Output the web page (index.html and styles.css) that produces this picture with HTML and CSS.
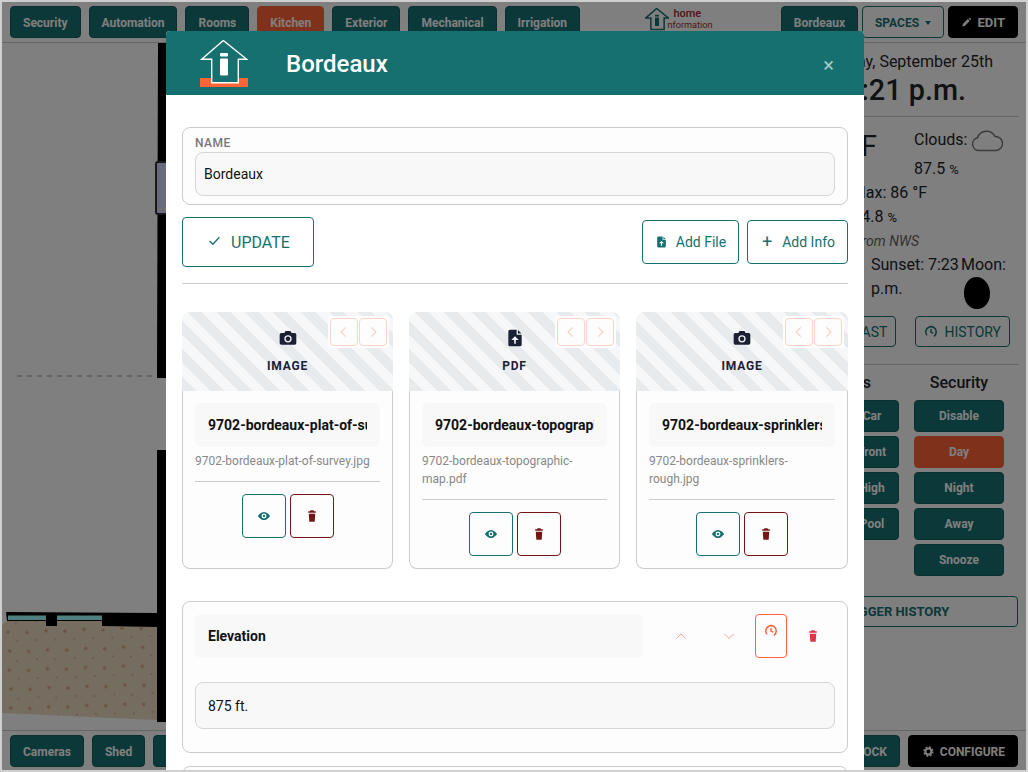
FILE: index.html

```html
<!DOCTYPE html>
<html lang="en">
<head>
    <meta charset="UTF-8">
    <meta name="viewport" content="width=device-width, initial-scale=1.0">
    <title>Bordeaux - Home Information</title>
    <link rel="stylesheet" href="styles.css">
</head>
<body>
    <svg class="icon-defs" aria-hidden="true">
        <symbol id="i-camera" viewBox="0 0 24 24">
            <path d="M9 3.5 7.6 6H4a2 2 0 0 0-2 2v10a2 2 0 0 0 2 2h16a2 2 0 0 0 2-2V8a2 2 0 0 0-2-2h-3.6L15 3.5z"/>
            <circle cx="12" cy="13" r="3.6" fill="none" stroke="#f4f5f7" stroke-width="1.6"/>
        </symbol>
        <symbol id="i-file-up" viewBox="0 0 24 24">
            <path fill-rule="evenodd" d="M6 2h8v6h6v12a2 2 0 0 1-2 2H6a2 2 0 0 1-2-2V4a2 2 0 0 1 2-2zM12 10l-4.5 4.5H11V19h2v-4.500h3.500zM15.500 2.300 19.700 6.500H15.500z"/>
        </symbol>
        <symbol id="i-eye" viewBox="0 0 24 24">
            <path fill-rule="evenodd" d="M12 5C6 5 1.500 12 1.500 12S6 19 12 19s10.500-7 10.500-7S18 5 12 5zM12 7.800a4.200 4.200 0 1 1 0 8.400 4.200 4.200 0 0 1 0-8.400zM12 10a2 2 0 1 0 0 4 2 2 0 0 0 0-4z"/>
        </symbol>
        <symbol id="i-trash" viewBox="0 0 24 24">
            <path d="M9.500 2h5l1 2H18.500v2.500H5.500V4h3zM6.500 8h11l-.8 13a1.500 1.500 0 0 1-1.500 1H8.800a1.500 1.500 0 0 1-1.500-1z"/>
        </symbol>
        <symbol id="i-history" viewBox="0 0 24 24">
            <path d="M5 17.500A9 9 0 1 1 21 12a9 9 0 0 1-4 7.500" fill="none" stroke="currentColor" stroke-width="2.600"/>
            <path d="M12 7v5.500l4 1.500" fill="none" stroke="currentColor" stroke-width="2.400"/>
        </symbol>
        <symbol id="i-gear" viewBox="0 0 24 24">
            <circle cx="12" cy="12" r="6.500" fill="none" stroke="currentColor" stroke-width="4.500"/>
            <circle cx="12" cy="12" r="9.800" fill="none" stroke="currentColor" stroke-width="3.500" stroke-dasharray="4.200 3.500"/>
        </symbol>
        <symbol id="i-pencil" viewBox="0 0 24 24">
            <path d="M3 21l1.200-5.500L15.500 4.200l4.300 4.300L8.500 19.800zM17 2.700l1.300-1a1.500 1.500 0 0 1 2 0l2 2a1.500 1.500 0 0 1 0 2l-1 1.300z"/>
        </symbol>
        <symbol id="i-left" viewBox="0 0 24 24"><path d="M15 4l-8 8 8 8" fill="none" stroke="currentColor" stroke-width="2"/></symbol>
        <symbol id="i-right" viewBox="0 0 24 24"><path d="M9 4l8 8-8 8" fill="none" stroke="currentColor" stroke-width="2"/></symbol>
        <symbol id="i-up" viewBox="0 0 24 24"><path d="M3 17l9-9 9 9" fill="none" stroke="currentColor" stroke-width="2"/></symbol>
        <symbol id="i-down" viewBox="0 0 24 24"><path d="M3 8l9 9 9-9" fill="none" stroke="currentColor" stroke-width="2"/></symbol>
        <symbol id="i-house" viewBox="0 0 48 47">
            <path d="M1.700 19.300 23.300 0.500 46.700 19.300H38.300V42.700H11.700V19.300z" fill="none" stroke="currentColor" stroke-width="3"/>
            <rect x="20" y="13" width="8" height="3.500" rx="1" fill="currentColor"/>
            <rect x="20" y="18.500" width="8" height="17" rx="1" fill="currentColor"/>
        </symbol>
    </svg>

    <div class="stage">
        <header class="top-bar">
            <nav class="btn-group">
                <a class="btn">Security</a>
                <a class="btn">Automation</a>
                <a class="btn">Rooms</a>
                <a class="btn btn-active">Kitchen</a>
                <a class="btn">Exterior</a>
                <a class="btn">Mechanical</a>
                <a class="btn">Irrigation</a>
            </nav>
            <div class="brand">
                <svg class="brand-house"><use href="#i-house"/></svg>
                <div class="brand-text">
                    <span class="brand-home">home</span>
                    <span class="brand-info">nformation</span>
                </div>
            </div>
            <div class="btn-group top-right">
                <a class="btn">Bordeaux</a>
                <a class="btn btn-outline">SPACES <span class="caret"></span></a>
                <a class="btn btn-dark"><svg class="icon-sm"><use href="#i-pencil"/></svg> EDIT</a>
            </div>
        </header>

        <main class="main">
            <div class="plan">
                <svg class="plan-svg" viewBox="2 43 766 687" width="766" height="687">
                    <defs>
                        <pattern id="stipple" width="38" height="38" patternUnits="userSpaceOnUse" patternTransform="rotate(-2)">
                            <circle cx="6" cy="6" r="1.800" fill="#d8a888"/>
                            <circle cx="25" cy="5" r="1.800" fill="#d8a888"/>
                            <circle cx="14" cy="14" r="1" fill="#d0b090"/>
                            <circle cx="32" cy="15" r="1" fill="#d0b090"/>
                            <circle cx="5" cy="25" r="1.800" fill="#d8a888"/>
                            <circle cx="24" cy="24" r="1.800" fill="#d8a888"/>
                            <circle cx="14" cy="33" r="1" fill="#d0b090"/>
                            <circle cx="33" cy="33" r="1" fill="#d0b090"/>
                        </pattern>
                    </defs>
                    <path d="M158 43H168V378H157z" fill="#000"/>
                    <rect x="156" y="162" width="12" height="52" rx="2" fill="#d4d4ff" stroke="#333" stroke-width="2"/>
                    <rect x="157" y="208" width="10" height="3" fill="#ddd"/>
                    <line x1="17" y1="376" x2="156" y2="376" stroke="#999" stroke-dasharray="5 5"/>
                    <path d="M157 450H168V722H157z" fill="#000"/>
                    <path d="M6 612 158 613V627H102V621H57V626H46V621H7z" fill="#000"/>
                    <path d="M8 615.500H46V620H8zM57 615.500H102V620H57z" fill="#a0ffff"/>
                    <path d="M7 621H46V626H57V621H102V626L157 627V720L2 713V625z" fill="#eadbc0"/>
                    <path d="M7 621H46V626H57V621H102V626L157 627V720L2 713V625z" fill="url(#stipple)"/>
                </svg>
            </div>

            <aside class="panel">
                <div class="date-line">Thursday, September 25th</div>
                <div class="time-line">12:21 p.m.</div>
                <div class="divider"></div>

                <div class="wx-top">
                    <div class="wx-temp">77 °F</div>
                    <div>
                        <div class="wx-clouds">Clouds:
                            <svg class="cloud" viewBox="0 0 32 24"><path d="M8 22.500A6.500 6.500 0 0 1 6.500 9.700 9.500 9.500 0 0 1 24 8.500 7 7 0 0 1 25 22.500z" fill="none" stroke="#777" stroke-width="1.500"/></svg>
                        </div>
                        <div class="wx-pct">87.5 <small>%</small></div>
                    </div>
                </div>
                <div class="wx-line wx-max">Min: 71 °F &nbsp;Max: 86 °F</div>
                <div class="wx-line wx-hum">Humidity: 54.8 <small>%</small></div>
                <div class="wx-line wx-src">Forecast from NWS</div>

                <div class="sun-row">
                    <div>Sunrise: 7:02 a.m.</div>
                    <div>Sunset: 7:23 p.m.</div>
                    <div>Moon:<div class="moon"></div></div>
                </div>

                <div class="wx-btns">
                    <a class="btn-line">FORECAST</a>
                    <a class="btn-line"><svg class="icon-sm"><use href="#i-history"/></svg> HISTORY</a>
                </div>
                <div class="divider divider-low"></div>

                <div class="ctl-grid">
                    <div class="ctl-col">
                        <h4 class="ctl-head ctl-head-left">Switches</h4>
                        <a class="btn">Car</a>
                        <a class="btn">Front</a>
                        <a class="btn">High</a>
                        <a class="btn">Pool</a>
                    </div>
                    <div class="ctl-col">
                        <h4 class="ctl-head">Security</h4>
                        <a class="btn">Disable</a>
                        <a class="btn btn-active">Day</a>
                        <a class="btn">Night</a>
                        <a class="btn">Away</a>
                        <a class="btn">Snooze</a>
                    </div>
                </div>
                <a class="btn btn-outline btn-trigger">TRIGGER HISTORY</a>
            </aside>
        </main>

        <footer class="bottom-bar">
            <div class="btn-group">
                <a class="btn">Cameras</a>
                <a class="btn">Shed</a>
                <a class="btn">Pool</a>
            </div>
            <div class="btn-group">
                <a class="btn">CLOCK</a>
                <a class="btn btn-dark"><svg class="icon-sm"><use href="#i-gear"/></svg> CONFIGURE</a>
            </div>
        </footer>

        <div class="backdrop"></div>

        <section class="modal">
            <div class="modal-header">
                <svg class="modal-logo" viewBox="0 0 48 47">
                    <rect y="38" width="48" height="9" fill="#ff6338"/>
                    <path d="M1.700 19.300 23.300 0.500 46.700 19.300H38.300V42.700H11.700V19.300z" fill="#177070" stroke="#fff" stroke-width="1.400"/>
                    <rect x="20" y="13" width="8" height="3.500" rx="1" fill="#fff"/>
                    <rect x="20" y="18.500" width="8" height="17" rx="1" fill="#fff"/>
                </svg>
                <h2 class="modal-title">Bordeaux</h2>
                <span class="modal-close">×</span>
            </div>

            <div class="modal-body">
                <div class="name-box">
                    <label class="name-label">NAME</label>
                    <div class="text-field">Bordeaux</div>
                </div>

                <div class="action-row">
                    <a class="btn-update"><svg class="icon-check" viewBox="0 0 24 24"><path d="M3 13l6 6L21 6" fill="none" stroke="currentColor" stroke-width="2.400"/></svg> UPDATE</a>
                    <div class="action-right">
                        <a class="btn-add"><svg class="icon-add"><use href="#i-file-up"/></svg> Add File</a>
                        <a class="btn-add"><span class="plus">+</span> Add Info</a>
                    </div>
                </div>
                <hr class="rule">

                <div class="file-grid">
                    <article class="file-card">
                        <div class="file-thumb">
                            <svg class="thumb-icon"><use href="#i-camera"/></svg>
                            <div class="thumb-label">IMAGE</div>
                            <div class="thumb-nav">
                                <a class="nav-btn"><svg><use href="#i-left"/></svg></a>
                                <a class="nav-btn"><svg><use href="#i-right"/></svg></a>
                            </div>
                        </div>
                        <div class="file-body">
                            <div class="file-name"><span>9702-bordeaux-plat-of-survey</span></div>
                            <div class="file-path">9702-bordeaux-plat-of-survey.jpg</div>
                            <hr class="rule-card">
                            <div class="file-btns">
                                <a class="square-btn view"><svg><use href="#i-eye"/></svg></a>
                                <a class="square-btn del"><svg><use href="#i-trash"/></svg></a>
                            </div>
                        </div>
                    </article>

                    <article class="file-card">
                        <div class="file-thumb">
                            <svg class="thumb-icon"><use href="#i-file-up"/></svg>
                            <div class="thumb-label">PDF</div>
                            <div class="thumb-nav">
                                <a class="nav-btn"><svg><use href="#i-left"/></svg></a>
                                <a class="nav-btn"><svg><use href="#i-right"/></svg></a>
                            </div>
                        </div>
                        <div class="file-body">
                            <div class="file-name"><span>9702-bordeaux-topographic-map</span></div>
                            <div class="file-path">9702-bordeaux-topographic-map.pdf</div>
                            <hr class="rule-card">
                            <div class="file-btns">
                                <a class="square-btn view"><svg><use href="#i-eye"/></svg></a>
                                <a class="square-btn del"><svg><use href="#i-trash"/></svg></a>
                            </div>
                        </div>
                    </article>

                    <article class="file-card">
                        <div class="file-thumb">
                            <svg class="thumb-icon"><use href="#i-camera"/></svg>
                            <div class="thumb-label">IMAGE</div>
                            <div class="thumb-nav">
                                <a class="nav-btn"><svg><use href="#i-left"/></svg></a>
                                <a class="nav-btn"><svg><use href="#i-right"/></svg></a>
                            </div>
                        </div>
                        <div class="file-body">
                            <div class="file-name"><span>9702-bordeaux-sprinklers-rough</span></div>
                            <div class="file-path">9702-bordeaux-sprinklers-rough.jpg</div>
                            <hr class="rule-card">
                            <div class="file-btns">
                                <a class="square-btn view"><svg><use href="#i-eye"/></svg></a>
                                <a class="square-btn del"><svg><use href="#i-trash"/></svg></a>
                            </div>
                        </div>
                    </article>
                </div>

                <article class="info-card">
                    <div class="info-head">
                        <div class="info-title">Elevation</div>
                        <a class="info-btn"><svg><use href="#i-up"/></svg></a>
                        <a class="info-btn"><svg><use href="#i-down"/></svg></a>
                        <a class="info-history"><svg><use href="#i-history"/></svg></a>
                        <a class="info-del"><svg><use href="#i-trash"/></svg></a>
                    </div>
                    <div class="text-field info-value">875 ft.</div>
                </article>

                <article class="info-card">
                    <div class="info-head">
                        <div class="info-title">Lot Size</div>
                    </div>
                </article>
            </div>
        </section>
    </div>
</body>
</html>
```

FILE: styles.css

```css
* {
    box-sizing: border-box;
}

html, body {
    height: 100%;
}

body {
    margin: 0;
    padding: 2px;
    background: #cfcfcf;
    font-family: Roboto, "Liberation Sans", sans-serif;
    font-size: 16px;
    color: #212529;
    overflow: hidden;
}

.icon-defs {
    display: none;
}

.stage {
    position: relative;
    width: 1024px;
    height: 768px;
    background: #fff;
    overflow: hidden;
    display: flex;
    flex-direction: column;
}

/* buttons under the backdrop */
.btn {
    display: flex;
    align-items: center;
    justify-content: center;
    height: 32px;
    padding: 0 12px;
    background: #177070;
    border: 1px solid #145f5f;
    border-radius: 4px;
    color: #fff;
    font-size: 12px;
    font-weight: 700;
    white-space: nowrap;
}

.btn-active {
    background: #ff6338;
    border-color: #ff6338;
}

.btn-outline {
    background: #fff;
    border-color: #177070;
    color: #177070;
}

.btn-dark {
    background: #000;
    border-color: #000;
}

.btn-group {
    display: flex;
    gap: 8px;
}

.icon-sm {
    width: 13px;
    height: 13px;
    margin-right: 6px;
    fill: currentColor;
}

.top-bar {
    display: flex;
    justify-content: space-between;
    align-items: center;
    height: 41px;
    padding: 0 8px;
    border-bottom: 1px solid #ccc;
    flex: none;
}

.top-bar .btn,
.bottom-bar .btn {
    padding-top: 1px;
}

.top-right {
    gap: 4px;
}

.top-right .btn-outline {
    gap: 6px;
    width: 82px;
}

.top-right .btn-dark {
    width: 70px;
    font-size: 13px;
}

.caret {
    border-top: 4px solid currentColor;
    border-left: 3.500px solid transparent;
    border-right: 3.500px solid transparent;
}

.brand {
    display: flex;
    width: 67px;
    height: 24px;
    margin: -4px 0 0 -3px;
}

.brand-house {
    width: 24px;
    height: 24px;
    color: #177070;
    fill: currentColor;
    flex: none;
}

.brand-text {
    display: flex;
    flex-direction: column;
    color: #a52a2a;
    line-height: 11px;
}

.brand-home {
    font-size: 11px;
    font-weight: 500;
    margin-left: 4px;
}

.brand-info {
    font-size: 9.200px;
    margin-left: -2px;
}

.main {
    flex: 1;
    display: flex;
    min-height: 0;
}

.plan {
    width: 766px;
    flex: none;
}

.plan-svg {
    display: block;
}

.panel {
    width: 250px;
    flex: none;
    padding-top: 7px;
}

.date-line {
    text-align: right;
    padding-right: 25px;
    line-height: 24px;
}

.time-line {
    text-align: right;
    padding-right: 52px;
    font-size: 28.800px;
    font-weight: 500;
    line-height: 36px;
    margin-top: -2px;
}

.divider {
    height: 1px;
    background: #ccc;
    margin-top: 8px;
    margin-right: -1px;
}

.divider-low {
    margin-top: 17px;
}

.wx-top {
    display: grid;
    grid-template-columns: 146px 1fr;
    padding-top: 11px;
}

.wx-temp {
    text-align: right;
    padding-right: 37px;
    font-size: 28.800px;
    line-height: 36px;
}

.wx-clouds {
    display: flex;
    align-items: center;
    gap: 4px;
    line-height: 24px;
    white-space: nowrap;
}

.cloud {
    width: 32px;
    height: 24px;
}

.wx-pct {
    line-height: 24px;
    margin-top: 5px;
}

small {
    font-size: 13px;
    line-height: 1;
}

.wx-line {
    line-height: 24px;
    text-align: right;
    white-space: nowrap;
}

.wx-max {
    padding-right: 91px;
}

.wx-hum {
    padding-right: 121px;
}

.wx-src {
    padding-right: 99px;
    font-size: 14px;
    font-style: italic;
    color: #666;
}

.sun-row {
    display: grid;
    grid-template-columns: 103px 90px 57px;
    line-height: 24px;
    height: 55px;
}

.moon {
    width: 26px;
    height: 32px;
    margin: 0 0 0 3px;
    background: #000;
    border-radius: 50% 55% 50% 50%;
}

.wx-btns {
    display: flex;
    justify-content: flex-end;
    gap: 19px;
    padding-right: 8px;
    margin-top: 8px;
}

.btn-line {
    display: flex;
    align-items: center;
    justify-content: center;
    height: 31px;
    padding: 0 8px;
    border: 1px solid #177070;
    border-radius: 4px;
    color: #177070;
    font-size: 14px;
    white-space: nowrap;
}

.btn-line .icon-sm {
    width: 14px;
    height: 14px;
}

.ctl-grid {
    display: grid;
    grid-template-columns: 54px 90px;
    gap: 15px;
    padding-left: 77px;
}

.ctl-col {
    display: flex;
    flex-direction: column;
    gap: 4px;
}

.ctl-head {
    margin: 0 0 -4px;
    height: 35px;
    line-height: 35px;
    font-size: 16px;
    font-weight: 500;
    text-align: center;
}

.ctl-head-left {
    display: flex;
    justify-content: flex-end;
    padding-right: 28px;
    white-space: nowrap;
}

.btn-trigger {
    height: 31px;
    margin-top: 20px;
    padding-left: 14px;
    font-size: 13px;
}

.bottom-bar {
    display: flex;
    justify-content: space-between;
    height: 40px;
    padding: 4px 8px 0;
    border-top: 1px solid #ccc;
    flex: none;
}

.bottom-bar .btn-dark {
    width: 110px;
    padding-left: 14px;
}

.bottom-bar .btn-group:last-child .btn:first-child {
    padding-left: 40px;
}

.backdrop {
    position: absolute;
    inset: 0;
    background: rgba(0, 0, 0, 0.5);
}

/* modal */
.modal {
    position: absolute;
    left: 164px;
    top: 29px;
    width: 698px;
    background: #fff;
    border-radius: 4px 4px 0 0;
}

.modal-header {
    display: flex;
    align-items: center;
    height: 64px;
    padding-left: 34px;
    background: #177070;
    color: #fff;
    border-radius: 4px 4px 0 0;
}

.modal-logo {
    width: 48px;
    height: 47px;
}

.modal-title {
    margin: 2px 0 0 38px;
    font-size: 24px;
    font-weight: 500;
}

.modal-close {
    margin-left: auto;
    margin-right: 30px;
    margin-top: 3px;
    font-size: 20px;
    color: #a4caca;
}

.modal-body {
    padding: 32px 16px 0;
}

.name-box {
    height: 78px;
    padding: 8px 12px;
    background: #fdfdfd;
    border: 1px solid #ccc;
    border-radius: 8px;
}

.name-label {
    display: block;
    height: 16px;
    font-size: 12px;
    line-height: 14px;
    font-weight: 500;
    letter-spacing: 0.5px;
    color: #777;
}

.text-field {
    display: flex;
    align-items: center;
    height: 44px;
    padding: 0 8px;
    background: #f8f8f8;
    border: 1px solid #d4d6da;
    border-radius: 8px;
    font-size: 14px;
    color: #111;
}

.action-row {
    display: flex;
    justify-content: space-between;
    align-items: center;
    margin-top: 12px;
}

.btn-update {
    display: flex;
    align-items: center;
    justify-content: center;
    gap: 10px;
    width: 132px;
    height: 50px;
    padding-left: 2px;
    border: 1px solid #177070;
    border-radius: 4px;
    color: #177070;
    font-size: 16px;
}

.icon-check {
    width: 13px;
    height: 13px;
    margin-top: -3px;
}

.action-right {
    display: flex;
    gap: 8px;
}

.btn-add {
    display: flex;
    align-items: center;
    justify-content: center;
    gap: 8px;
    height: 44px;
    border: 1px solid #177070;
    border-radius: 4px;
    color: #177070;
    font-size: 14px;
    width: 97px;
}

.btn-add:last-child {
    width: 101px;
    padding-left: 2px;
}

.icon-add {
    width: 13px;
    height: 14px;
    fill: currentColor;
}

.plus {
    font-size: 18px;
    line-height: 14px;
    margin-right: 2px;
}

.rule {
    margin: 16px 0 28px;
    border: 0;
    border-top: 1px solid #ccc;
}

.file-grid {
    display: grid;
    grid-template-columns: 211px 211px 212px;
    gap: 16px;
}

.file-card {
    display: flex;
    flex-direction: column;
}

.file-thumb {
    position: relative;
    height: 79px;
    padding-top: 16px;
    text-align: center;
    border-radius: 8px 8px 0 0;
    background: repeating-linear-gradient(45deg, #e8ebee, #e8ebee 10px, #f6f7f9 10px, #f6f7f9 20px);
}

.thumb-icon {
    display: block;
    width: 20px;
    height: 20px;
    margin: 0 auto;
    fill: #1c2033;
}

.thumb-label {
    margin-top: 11px;
    font-size: 12px;
    font-weight: 700;
    letter-spacing: 0.8px;
    color: #1c2033;
}

.thumb-nav {
    position: absolute;
    top: 4px;
    right: 4px;
    display: flex;
    gap: 1px;
    padding: 2px;
    background: #fdfdfd;
    border-radius: 3px;
}

.nav-btn {
    display: flex;
    align-items: center;
    justify-content: center;
    width: 28px;
    height: 28px;
    border: 1px solid #fdd5c8;
    border-radius: 4px;
    color: #fdcfc0;
}

.nav-btn svg {
    width: 14px;
    height: 14px;
}

.file-body {
    flex: 1;
    padding: 12px;
    background: #fdfdfd;
    border: 1px solid #ccc;
    border-top: 0;
    border-radius: 0 0 8px 8px;
}

.file-name {
    height: 44px;
    padding: 0 13px;
    background: #f8f8f8;
    border-radius: 6px;
    font-size: 14px;
    font-weight: 700;
    line-height: 44px;
    color: #111;
}

.file-name span {
    display: block;
    white-space: nowrap;
    overflow: hidden;
}

.file-path {
    margin-top: 5px;
    font-size: 12px;
    line-height: 18px;
    color: #888;
}

.rule-card {
    margin: 11px 0 12px;
    border: 0;
    border-top: 1px solid #ccc;
}

.file-btns {
    display: flex;
    justify-content: center;
    gap: 4px;
}

.square-btn {
    display: flex;
    align-items: center;
    justify-content: center;
    width: 44px;
    height: 44px;
    border: 1px solid;
    border-radius: 4px;
}

.square-btn svg {
    width: 14px;
    height: 14px;
    fill: currentColor;
}

.square-btn.view {
    color: #177070;
}

.square-btn.del {
    color: #741616;
}

.info-card {
    margin-top: 32px;
    padding: 12px 12px 23px;
    border: 1px solid #ccc;
    border-radius: 8px;
    background: #fdfdfd;
}

.info-card + .info-card {
    margin-top: 13px;
}

.info-head {
    display: flex;
    align-items: stretch;
    height: 44px;
}

.info-title {
    flex: none;
    width: 448px;
    margin-right: 14px;
    padding-left: 13px;
    background: #f8f8f8;
    border-radius: 6px;
    font-size: 14px;
    font-weight: 700;
    line-height: 44px;
    color: #111;
}

.info-btn {
    display: flex;
    align-items: center;
    justify-content: center;
    flex: none;
    width: 48px;
    color: #ffa08a;
}

.info-btn svg {
    width: 12px;
    height: 12px;
}

.info-history {
    display: flex;
    justify-content: center;
    flex: none;
    width: 32px;
    margin: 0 2px;
    padding-top: 9px;
    border: 1px solid #ff6338;
    border-radius: 4px;
    color: #ff6338;
}

.info-history svg {
    width: 14px;
    height: 14px;
}

.info-del {
    display: flex;
    align-items: center;
    justify-content: center;
    flex: none;
    width: 48px;
    color: #dc3545;
    fill: currentColor;
}

.info-del svg {
    width: 14px;
    height: 14px;
}

.info-value {
    height: 47px;
    margin-top: 24px;
    padding: 0 12px;
}
```
